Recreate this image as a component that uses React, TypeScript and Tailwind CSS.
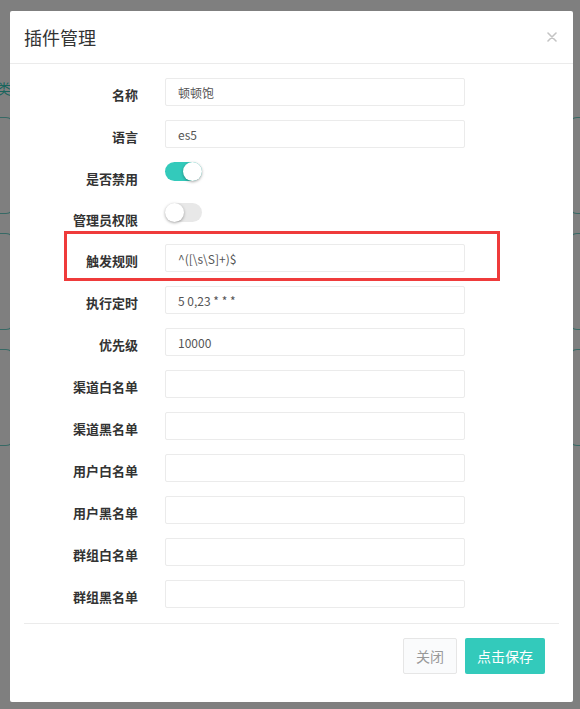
import { useState } from "react";

interface FieldItem {
  label: string;
  kind: "input" | "switch";
  value?: string;
  on?: boolean;
  marked?: boolean;
}

const fields: FieldItem[] = [
  { label: "名称", kind: "input", value: "顿顿饱" },
  { label: "语言", kind: "input", value: "es5" },
  { label: "是否禁用", kind: "switch", on: true },
  { label: "管理员权限", kind: "switch", on: false },
  { label: "触发规则", kind: "input", value: "^([\\s\\S]+)$", marked: true },
  { label: "执行定时", kind: "input", value: "5 0,23 * * *" },
  { label: "优先级", kind: "input", value: "10000" },
  { label: "渠道白名单", kind: "input", value: "" },
  { label: "渠道黑名单", kind: "input", value: "" },
  { label: "用户白名单", kind: "input", value: "" },
  { label: "用户黑名单", kind: "input", value: "" },
  { label: "群组白名单", kind: "input", value: "" },
  { label: "群组黑名单", kind: "input", value: "" },
];

const Switch = ({ initial }: { initial: boolean }) => {
  const [on, setOn] = useState(initial);
  return (
    <button
      type="button"
      onClick={() => setOn(!on)}
      className={`flex h-[19px] w-[37px] items-center rounded-full ${on ? "justify-end bg-[#33cabb]" : "justify-start bg-[#e8e8e8]"}`}
    >
      <span className="h-[19px] w-[19px] rounded-full bg-white shadow-[0_1px_3px_rgba(0,0,0,0.35)]"></span>
    </button>
  );
};

const App = () => {
  return (
    <div
      className="relative h-[709px] w-[580px] overflow-hidden bg-white"
      style={{ fontFamily: '"Noto Sans CJK SC", "Noto Sans", sans-serif' }}
    >
      {/* page behind the dialog */}
      <div className="flex flex-col pt-[80px]">
        <div className="flex h-[16px]">
          <div className="flex w-[11px] justify-end whitespace-nowrap text-[14px] leading-[16px] text-[#33cabb]">
            建设类
          </div>
        </div>
        <div className="mt-[21px] flex flex-col gap-[19px]">
          {[0, 1, 2].map((i) => (
            <div key={i} className="flex h-[97px] justify-between">
              <div className="w-[14px] rounded-r-[8px] border border-l-0 border-[#6fd3ca] bg-white"></div>
              <div className="w-[11px] rounded-l-[8px] border border-r-0 border-[#6fd3ca] bg-white"></div>
            </div>
          ))}
        </div>
      </div>

      {/* backdrop */}
      <div className="absolute inset-0 bg-black/50"></div>

      {/* dialog */}
      <div className="absolute left-[10px] top-[11px] flex w-[563px] flex-col rounded-[2px] bg-white">
        <div className="flex h-[53px] items-center justify-between border-b border-[#ebebeb] pl-[14px] pr-[16px]">
          <h4 className="text-[18px] font-normal text-[#333]">插件管理</h4>
          <svg width="10" height="10" viewBox="0 0 10 10" className="text-[#c4c4c4]">
            <path d="M1 1 L9 9 M9 1 L1 9" stroke="currentColor" strokeWidth="1.6" strokeLinecap="round" />
          </svg>
        </div>

        <div className="flex flex-col gap-[14px] px-[15px] pb-[15px] pt-[14px]">
          {fields.map((f) => (
            <div
              key={f.label}
              className={`relative flex ${f.kind === "switch" ? "h-[27px]" : "h-[28px]"}`}
            >
              {f.marked && (
                <div className="absolute left-[39px] top-[-13px] h-[50px] w-[436px] border-[3px] border-[#ef3b3b]"></div>
              )}
              <label className="w-[113px] pt-[7px] text-right text-[13px] font-bold leading-[20px] text-[#333]">
                {f.label}
              </label>
              <div className="ml-[27px]">
                {f.kind === "switch" ? (
                  <Switch initial={!!f.on} />
                ) : (
                  <input
                    readOnly
                    defaultValue={f.value}
                    className="h-[28px] w-[300px] rounded-[2px] border border-[#ebebeb] px-[12px] text-[12px] text-[#555] outline-none"
                  />
                )}
              </div>
            </div>
          ))}
        </div>

        <div className="mx-[14px] flex justify-end gap-[8px] border-t border-[#ebebeb] pb-[28px] pr-[14px] pt-[14px]">
          <button className="h-[36px] rounded-[2px] border border-[#e6e6e6] bg-[#fafbfc] px-[12px] text-[14px] text-[#999]">
            关闭
          </button>
          <button className="h-[36px] rounded-[2px] bg-[#33cabb] px-[12px] text-[14px] text-white">
            点击保存
          </button>
        </div>
      </div>
    </div>
  );
};

export default App;
